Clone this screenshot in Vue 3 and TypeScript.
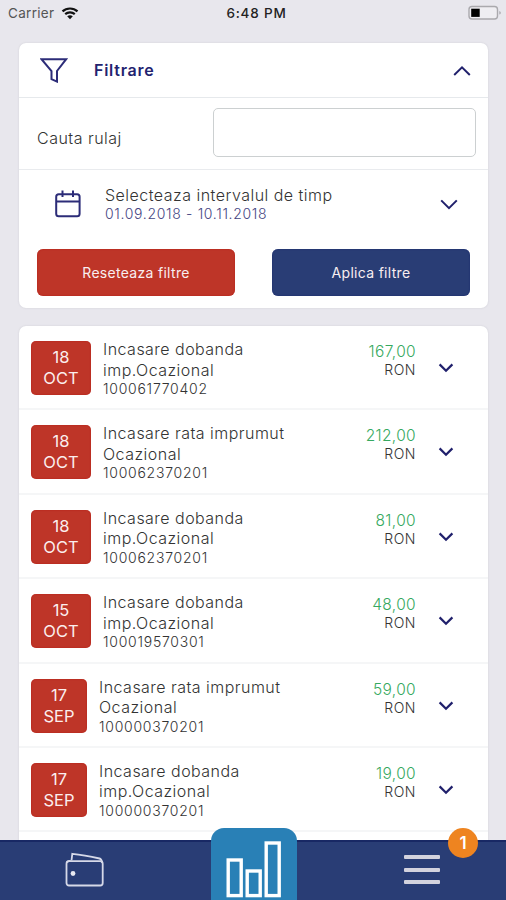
<script setup lang="ts">
interface Transaction {
  day: string
  month: string
  title: [string, string]
  account: string
  amount: string
}

const transactions: Transaction[] = [
  { day: '18', month: 'OCT', title: ['Incasare dobanda', 'imp.Ocazional'], account: '100061770402', amount: '167,00' },
  { day: '18', month: 'OCT', title: ['Incasare rata imprumut', 'Ocazional'], account: '100062370201', amount: '212,00' },
  { day: '18', month: 'OCT', title: ['Incasare dobanda', 'imp.Ocazional'], account: '100062370201', amount: '81,00' },
  { day: '15', month: 'OCT', title: ['Incasare dobanda', 'imp.Ocazional'], account: '100019570301', amount: '48,00' },
  { day: '17', month: 'SEP', title: ['Incasare rata imprumut', 'Ocazional'], account: '100000370201', amount: '59,00' },
  { day: '17', month: 'SEP', title: ['Incasare dobanda', 'imp.Ocazional'], account: '100000370201', amount: '19,00' },
]
</script>

<template>
  <div class="screen">
    <header class="status">
      <div class="carrier">
        <span>Carrier</span>
        <svg class="wifi" viewBox="0 0 18 13" width="18" height="13">
          <path d="M1.5 4.4C5.7 .5 12.3 .5 16.5 4.4" />
          <path d="M4.2 7.1C6.9 4.7 11.1 4.7 13.8 7.1" />
          <path class="dot" d="M6.2 9.2Q9 7.2 11.8 9.2L9 12.2Z" />
        </svg>
      </div>
      <span class="clock">6:48 PM</span>
      <svg class="battery" viewBox="0 0 34 16" width="34" height="16">
        <rect x="1" y="1.5" width="28.5" height="12.5" rx="3" fill="#efeef2" stroke="#aaa9ad" stroke-width="1.4" />
        <rect x="3.2" y="3.7" width="8.5" height="8.2" fill="#000" />
        <path d="M31.3 6v3.6q1.5-.4 1.5-1.8t-1.5-1.8Z" fill="#aaa9ad" />
      </svg>
    </header>

    <section class="card filter">
      <div class="filter-head">
        <svg class="funnel" viewBox="0 0 28 26" width="28" height="26">
          <path d="M1.5 2.2H26.2L17 14V24.6L11.5 22.2V14Z" />
        </svg>
        <h1>Filtrare</h1>
        <svg class="chevron wide" viewBox="0 0 18 11" width="18" height="11"><path d="M1.2 10 9 2.4l7.8 7.6" /></svg>
      </div>
      <div class="search">
        <label for="q">Cauta rulaj</label>
        <input id="q" type="text" />
      </div>
      <div class="interval">
        <svg class="calendar" viewBox="0 0 26 28" width="26" height="28">
          <rect x="1.2" y="4.2" width="23.4" height="22" rx="2.5" />
          <path d="M1.2 11.6H24.6M7.5 .5V7M18 .5V7" />
        </svg>
        <div class="interval-text">
          <span class="interval-title">Selecteaza intervalul de timp</span>
          <span class="interval-dates">01.09.2018 - 10.11.2018</span>
        </div>
        <svg class="chevron wide" viewBox="0 0 18 11" width="18" height="11"><path d="M1.2 1.4 9 9.2l7.8-7.8" /></svg>
      </div>
      <div class="actions">
        <button class="btn reset">Reseteaza filtre</button>
        <button class="btn apply">Aplica filtre</button>
      </div>
    </section>

    <section class="card list">
      <article v-for="(t, i) in transactions" :key="i" class="row">
        <div class="date" :class="{ narrow: t.month === 'SEP' }">
          <span class="day">{{ t.day }}</span>
          <span>{{ t.month }}</span>
        </div>
        <div class="info">
          <span class="line">{{ t.title[0] }}</span>
          <span class="line">{{ t.title[1] }}</span>
          <span class="account">{{ t.account }}</span>
        </div>
        <div class="sum">
          <span class="amount">{{ t.amount }}</span>
          <span class="currency">RON</span>
        </div>
        <svg class="chevron" viewBox="0 0 16 10" width="16" height="10"><path d="M1.6 1.4 8 7.8l6.4-6.4" /></svg>
      </article>
    </section>

    <nav class="tabs">
      <svg class="wallet" viewBox="0 0 40 36" width="40" height="36">
        <rect x="1.5" y="9.2" width="36.2" height="24.3" rx="2.5" />
        <path d="M2 10.5Q2.5 8.9 5.5 8.9M6.5 8.5 7.3 1.8Q19 3 34.5 6.5 36.7 7 37.2 11" />
        <circle cx="8" cy="21.5" r="2.4" />
      </svg>
      <div class="stats">
        <svg viewBox="0 0 58 60" width="58" height="60">
          <rect x="3.2" y="21" width="13" height="35.6" />
          <rect x="22.2" y="32" width="13" height="24.6" />
          <rect x="41.2" y="4" width="13" height="52.6" />
        </svg>
      </div>
      <div class="menu">
        <i></i><i></i><i></i>
        <span class="badge">1</span>
      </div>
    </nav>
  </div>
</template>

<style>
body {
  margin: 0;
}
</style>

<style scoped>
* {
  box-sizing: border-box;
}
.screen {
  position: relative;
  width: 506px;
  height: 900px;
  overflow: hidden;
  background: #e8e7ed;
  font-family: Inter, "Liberation Sans", sans-serif;
  font-weight: 300;
  color: #333;
}
.status {
  display: grid;
  grid-template-columns: 1fr auto 1fr;
  align-items: center;
  height: 26px;
  padding: 0 4px 0 8px;
  margin-bottom: 17px;
  font-size: 13.5px;
}
.carrier {
  display: flex;
  align-items: center;
  gap: 7px;
  color: #555;
  font-weight: 400;
  letter-spacing: 0.3px;
}
.wifi {
  fill: none;
  stroke: #111;
  stroke-width: 2.2;
}
.wifi .dot {
  fill: #111;
  stroke: none;
}
.clock {
  font-weight: 500;
  color: #222;
  letter-spacing: 0.8px;
  margin-left: 3px;
}
.battery {
  justify-self: end;
}
.card {
  width: 469px;
  margin-left: 19px;
  border-radius: 7px;
  background: #fff;
  box-shadow: 0 0 2px rgba(90, 90, 110, 0.18);
}
.filter {
  height: 265px;
  margin-bottom: 18px;
}
.list {
  height: 580px;
}
.chevron {
  flex: none;
  fill: none;
  stroke: #20206c;
  stroke-width: 2.2;
}
.chevron.wide {
  stroke-width: 2;
}
.filter-head {
  display: flex;
  align-items: center;
  height: 55px;
  padding: 0 17px 0 21px;
  border-bottom: 1.5px solid #e6e9ec;
}
.funnel {
  fill: none;
  stroke: #2c2c78;
  stroke-width: 2;
}
h1 {
  flex: 1;
  margin: 0 0 0 26px;
  font-size: 16px;
  font-weight: 600;
  color: #23236f;
  letter-spacing: 0.75px;
}
.search {
  display: flex;
  align-items: center;
  height: 72px;
  padding: 0 12px 0 18px;
  border-bottom: 1.5px solid #e9ebee;
}
label {
  flex: 1;
  padding-top: 9px;
  font-size: 16px;
  letter-spacing: 0.48px;
}
input {
  width: 263px;
  height: 49px;
  margin-bottom: 2px;
  border: 1.5px solid #ccd0d1;
  border-radius: 5px;
  background: #fff;
}
.interval {
  display: flex;
  align-items: center;
  height: 68px;
  padding: 0 30px 0 36px;
}
.calendar {
  fill: none;
  stroke: #2c2c78;
  stroke-width: 2;
}
.interval-text {
  flex: 1;
  display: flex;
  flex-direction: column;
  margin-left: 24px;
  white-space: nowrap;
}
.interval-title {
  font-size: 16px;
  line-height: 20px;
  letter-spacing: 0.48px;
}
.interval-dates {
  font-size: 14px;
  line-height: 18px;
  letter-spacing: 0.67px;
  color: #454582;
}
.actions {
  display: flex;
  justify-content: space-between;
  padding: 11px 18px 0;
}
.btn {
  width: 198px;
  height: 47px;
  padding: 0;
  border: 0;
  border-radius: 6px;
  color: #f8eef0;
  font-family: inherit;
  font-size: 14px;
  font-weight: 400;
  letter-spacing: 0.3px;
}
.reset {
  background: #be3528;
  box-shadow: inset 0 0 1.5px #b0130e;
}
.apply {
  background: #293d75;
  box-shadow: inset 0 0 1.5px #14206a;
}
.row {
  display: flex;
  height: 84.4px;
  padding: 15px 34px 0 12px;
  border-bottom: 2px solid #f5f6f7;
}
.date {
  display: flex;
  flex-direction: column;
  align-items: center;
  width: 60px;
  height: 54px;
  padding-top: 6px;
  margin-right: 12px;
  border-radius: 5px;
  background: #be3528;
  box-shadow: inset 0 0 1.5px #b0130e;
  color: #fbeeee;
  font-size: 16.5px;
  line-height: 21px;
  font-weight: 400;
}
.date.narrow {
  width: 56px;
}
.info {
  flex: 1;
  display: flex;
  flex-direction: column;
  margin-top: -2px;
  white-space: nowrap;
}
.line {
  font-size: 16px;
  line-height: 20.5px;
  letter-spacing: 0.47px;
}
.account {
  font-size: 14px;
  line-height: 18px;
  letter-spacing: 0.75px;
}
.sum {
  display: flex;
  flex-direction: column;
  align-items: flex-end;
  margin-right: 22px;
}
.amount {
  color: #36a960;
  font-size: 15.5px;
  line-height: 21px;
  letter-spacing: 0.35px;
}
.currency {
  font-size: 14px;
  line-height: 16px;
  letter-spacing: 0.5px;
}
.row .chevron {
  margin-top: 22px;
}
.tabs {
  position: absolute;
  left: 0;
  right: 0;
  bottom: 0;
  display: grid;
  grid-template-columns: 211px 86px 1fr;
  align-items: start;
  height: 60px;
  background: #293d75;
  border-top: 2px solid #182864;
}
.wallet {
  margin: 10px 0 0 65px;
  fill: none;
  stroke: #d6d9e8;
  stroke-width: 1.8;
}
.wallet circle {
  fill: #e8e9f2;
  stroke: none;
}
.stats {
  height: 74px;
  margin-top: -14px;
  padding: 11px 0 0 13.5px;
  border-radius: 13px 13px 0 0;
  background: #2980b6;
}
.stats svg {
  display: block;
  fill: none;
  stroke: #fff;
  stroke-width: 3.4;
}
.menu {
  position: relative;
  display: flex;
  flex-direction: column;
  gap: 8.5px;
  padding: 13px 0 0 107px;
}
.menu i {
  width: 36px;
  height: 4px;
  border-radius: 1px;
  background: #d3d3de;
}
.badge {
  position: absolute;
  left: 151px;
  top: -14px;
  width: 30px;
  height: 30px;
  border-radius: 50%;
  background: #ee8420;
  color: #fff;
  font-size: 17px;
  font-weight: 600;
  line-height: 31px;
  text-align: center;
}
</style>
